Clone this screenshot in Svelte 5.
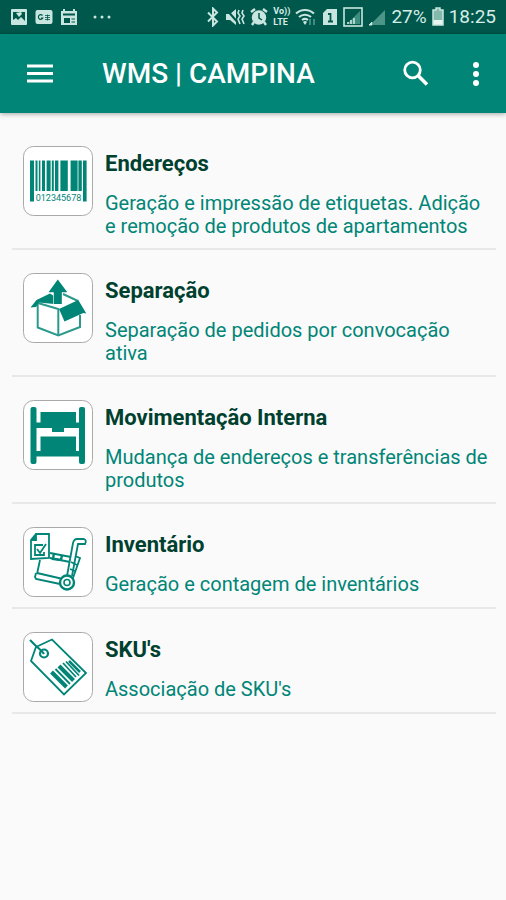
<script>
	const title = 'WMS | CAMPINA';

	const items = [
		{
			icon: 'barcode',
			name: 'Endereços',
			description: 'Geração e impressão de etiquetas. Adição e remoção de produtos de apartamentos'
		},
		{
			icon: 'box',
			name: 'Separação',
			description: 'Separação de pedidos por convocação ativa'
		},
		{
			icon: 'rack',
			name: 'Movimentação Interna',
			description: 'Mudança de endereços e transferências de produtos'
		},
		{
			icon: 'cart',
			name: 'Inventário',
			description: 'Geração e contagem de inventários'
		},
		{
			icon: 'tag',
			name: "SKU's",
			description: "Associação de SKU's"
		}
	];

	// [x, width] of each bar
	const bars = [
		[12.5, 2],
		[15.8, 1.6],
		[19, 3],
		[23.6, 4],
		[28.8, 2],
		[32, 3.4],
		[37.4, 7.4],
		[47.6, 7],
		[55.4, 3.4]
	];
</script>

<div class="statusBar">
	<div class="group notifications">
		<svg width="18" height="18" viewBox="0 0 18 18">
			<rect x="1" y="1" width="16" height="16" rx="1" fill="#c8e6df" />
			<path d="M3 4h12v9l-4-4-3 3-2-2-3 2z" fill="#00574b" />
			<path d="M6 5l3 4 3-3-1-2z" fill="#c8e6df" />
		</svg>
		<svg width="18" height="18" viewBox="0 0 18 18">
			<rect x="0.5" y="2" width="17" height="14" rx="2" fill="#c8e6df" />
			<path d="M7.5 7.5a2.3 2.3 0 1 0 .3 2.5H6" fill="none" stroke="#00574b" stroke-width="1.2" />
			<path d="M10 7.5h5M10 9.5h5M10 11.5h5M12.5 6.5v6" stroke="#00574b" stroke-width="0.8" />
		</svg>
		<svg width="18" height="18" viewBox="0 0 18 18">
			<path d="M1 3h2V1h2v2h8V1h2v2h2v14H1z" fill="#c8e6df" />
			<path d="M3 6.5h12" stroke="#00574b" stroke-width="2" />
			<path d="M4 10h6v5H4z" fill="#00574b" />
			<path d="M11.500 11h3.500M11.500 14h3.500" stroke="#00574b" />
		</svg>
		<svg class="more" width="20" height="18" viewBox="0 0 20 18" fill="#c8e6df">
			<circle cx="2" cy="9" r="1.5" />
			<circle cx="9" cy="9" r="1.5" />
			<circle cx="16" cy="9" r="1.5" />
		</svg>
	</div>
	<div class="group">
		<svg width="14" height="20" viewBox="0 0 14 20">
			<path d="M2 5.5l9 9-4 4V1.5l4 4-9 9" fill="none" stroke="#c8e6df" stroke-width="2" />
		</svg>
		<svg width="20" height="20" viewBox="0 0 20 20">
			<path d="M1 7h4l6-5v16l-6-5H1z" fill="#c8e6df" />
			<path d="M1 2l14 16" stroke="#00574b" stroke-width="2" />
			<path d="M14 3l-1 3 2 3-2 3 2 5M18 3l-1 3 2 3-2 3 2 5" fill="none" stroke="#c8e6df" stroke-width="1.6" />
		</svg>
		<svg width="18" height="20" viewBox="0 0 18 20">
			<circle cx="9" cy="10.5" r="7.2" fill="#c8e6df" />
			<path d="M1 5l4-3M17 5l-4-3M4 15l-2 3M14 15l2 3" stroke="#c8e6df" stroke-width="2.4" />
			<path d="M9 6v5l3 2" fill="none" stroke="#00574b" stroke-width="1.5" />
		</svg>
		<span class="volte"><span>Vo))</span><span>LTE</span></span>
		<svg width="22" height="20" viewBox="0 0 22 20">
			<path d="M1 6.5a13 13 0 0 1 18 0M4 10a9 9 0 0 1 12 0M7 13a5 5 0 0 1 6 0" fill="none" stroke="#c8e6df" stroke-width="2" />
			<path d="M8 15a3 3 0 0 1 4 0l-2 3z" fill="#c8e6df" />
			<path d="M15 12v6M19 12v6" stroke="#3f8d80" stroke-width="2" />
		</svg>
		<svg width="16" height="20" viewBox="0 0 16 20">
			<path d="M5 2h10v16H1V6z" fill="#c8e6df" />
			<path d="M6 7h2.5v7M6 14.5h5" fill="none" stroke="#00574b" stroke-width="1.8" />
		</svg>
		<svg width="20" height="20" viewBox="0 0 20 20">
			<rect x="1" y="1" width="18" height="18" fill="none" stroke="#c8e6df" stroke-width="1.6" />
			<path d="M17 4v13H4z" fill="#3f8d80" />
			<path d="M5 17v-2M8 17v-4M11 17v-6" stroke="#c8e6df" stroke-width="1.6" />
		</svg>
		<svg width="18" height="20" viewBox="0 0 18 20">
			<path d="M17 3v15H5v-3z" fill="#4b9589" />
			<path d="M1 18h3v-3z" fill="#c8e6df" stroke="#c8e6df" />
		</svg>
		<span class="percent">27%</span>
		<svg width="12" height="20" viewBox="0 0 12 20">
			<path d="M1 3h3V1h4v2h3v15H1z" fill="#83b8ad" />
			<path d="M1 13h10v5H1z" fill="#e6f6f2" />
			<path d="M1 3h3V1h4v2h3v15H1z" fill="none" stroke="#c8e6df" stroke-width="1.5" />
		</svg>
		<span class="clock">18:25</span>
	</div>
</div>

<header class="appBar">
	<button class="iconButton" aria-label="Menu">
		<svg width="28" height="28" viewBox="0 0 28 28">
			<path d="M1 6h26M1 13.5h26M1 21h26" stroke="#fff" stroke-width="3" />
		</svg>
	</button>
	<h1>{title}</h1>
	<button class="iconButton" aria-label="Buscar">
		<svg width="28" height="28" viewBox="0 0 28 28" fill="none" stroke="#fff">
			<circle cx="10.5" cy="10" r="7.8" stroke-width="2.8" />
			<path d="M16 15.5l9 9" stroke-width="3.6" />
		</svg>
	</button>
	<button class="iconButton overflow" aria-label="Mais opções">
		<svg width="8" height="28" viewBox="0 0 8 28" fill="#fff">
			<circle cx="4" cy="5" r="3" />
			<circle cx="4" cy="14" r="3" />
			<circle cx="4" cy="23" r="3" />
		</svg>
	</button>
</header>

<main>
	<ul>
		{#each items as item}
			<li>
				<a href="#{item.icon}">
					<svg class="picture" width="70" height="70" viewBox="0 0 70 70" aria-hidden="true">
						<rect x="0.5" y="0.5" width="69" height="69" rx="10" fill="#fff" stroke="#a9a9a9" />
						{#if item.icon === 'barcode'}
							<g fill="#008577">
								<rect x="7" y="14.5" width="4" height="41" />
								<rect x="60" y="14.5" width="3.6" height="41" />
								{#each bars as [x, width]}
									<rect {x} y="14.5" {width} height="30.5" />
								{/each}
								<text x="35.5" y="55" text-anchor="middle">012345678</text>
							</g>
						{:else if item.icon === 'box'}
							<g fill="none" stroke="#2b9a8c" stroke-width="2">
								<path d="M14.700 31v23.500l20.600 8 21.700-8.500V42" />
								<path d="M35.300 62V36L15 30" />
								<path d="M40 21l15 7" />
							</g>
							<g fill="#008577">
								<path d="M7.500 34.500l6-7.500L27 20.500l4 2.500v8l-15-1.500-3 4.500z" />
								<path d="M36 36l19.300-9 8 13.500-3-.5-18.800 8.500z" />
							</g>
							<path d="M34.800 6.500L25.500 19.300h5.300V31h8V19.300h5.500z" fill="#008577" stroke="#fff" stroke-width="1.2" paint-order="stroke" />
						{:else if item.icon === 'rack'}
							<g fill="#008577">
								<rect x="7.5" y="7" width="6" height="57" rx="2" />
								<rect x="56" y="7" width="6" height="57" rx="2" />
								<rect x="12" y="22.5" width="45" height="5.5" />
								<rect x="12" y="51" width="45" height="5.5" />
								<rect x="17.5" y="12" width="35.5" height="16" />
								<rect x="29" y="27" width="12" height="5" />
								<rect x="17.5" y="36.5" width="35.5" height="19" />
							</g>
						{:else if item.icon === 'cart'}
							<g fill="none" stroke="#008577" stroke-width="1.8">
								<path d="M13 7h13v24l-18 1V13z" />
								<path d="M13 7v6H8" fill="#008577" />
								<path d="M20 18h-8v10h9v-3M14 22l3 4 6-9" />
								<path d="M17 33l-3 14M27 26l21 4M27 31l20 4" />
								<path d="M31 26l-1 6 8 1 1-5" stroke-width="2.4" />
								<path d="M13 46l-1 4 1 2 24 5M14 46l26 6" />
								<path d="M44 49l6-33q1-4 4-4h7q3 1 1 5h-7l-6 32" />
								<path d="M52 29l5 2-7 20M48 35l6 3M47 42l5 2" />
								<circle cx="44" cy="55.5" r="7" fill="#fff" stroke-width="2.4" />
								<circle cx="44" cy="55.5" r="3" stroke-width="1.6" />
							</g>
						{:else}
							<g fill="none" stroke="#008577" stroke-width="1.8">
								<path d="M13 15L29 7.5 63 41 41 62.500 8 29z" />
								<circle cx="21" cy="21.500" r="4" stroke-width="2.2" />
								<path d="M7 8l6 6q6 5 8 8" stroke-width="2.2" />
								<path d="M28.5 40l15 15" stroke-width="4" />
								<path d="M32.5 37l14.5 15" />
								<path d="M36 34l14.5 14.5" stroke-width="4" />
								<path d="M40 31l13 14M43 29.5l13 14" />
								<path d="M46 29l11 11" stroke-width="2.5" />
							</g>
						{/if}
					</svg>
					<span class="text">
						<strong>{item.name}</strong>
						<span class="description">{item.description}</span>
					</span>
				</a>
			</li>
		{/each}
	</ul>
</main>

<style>
	:global(body) {
		background: #fafafa;
		font-family: Roboto, 'Liberation Sans', sans-serif;
	}
	svg {
		display: block;
		flex: none;
	}
	.statusBar {
		display: flex;
		justify-content: space-between;
		align-items: center;
		height: 34px;
		padding: 0 10px;
		background: #00574b;
		color: #d5ede8;
	}
	.group {
		display: flex;
		align-items: center;
		gap: 5px;
	}
	.notifications {
		gap: 7px;
	}
	.more {
		margin-left: 8px;
	}
	.volte {
		display: flex;
		flex-direction: column;
		font-size: 9px;
		font-weight: 700;
		line-height: 11px;
	}
	.percent,
	.clock {
		font-size: 19px;
		line-height: 24px;
	}
	.appBar {
		position: relative;
		display: flex;
		align-items: center;
		height: 79px;
		padding: 0 16px 0 26px;
		background: #008577;
		box-shadow: 0 1px 5px rgba(0, 0, 0, 0.35);
	}
	.iconButton {
		display: block;
		border: none;
		padding: 0;
		background: none;
		cursor: pointer;
	}
	.overflow {
		margin-left: 32px;
		padding: 0 10px;
	}
	h1 {
		flex: 1;
		margin: 0 0 0 48px;
		color: #fff;
		font-size: 28px;
		font-weight: 500;
		line-height: 36px;
	}
	main {
		padding: 10px 10px 0 12px;
	}
	ul {
		margin: 0;
		padding: 0;
		list-style: none;
	}
	li {
		border-bottom: 2px solid #e8e8e8;
	}
	a {
		display: flex;
		align-items: flex-start;
		gap: 12px;
		padding: 23px 4px 10px 11px;
		color: #008577;
		text-decoration: none;
	}
	.picture text {
		font-size: 9px;
	}
	.text {
		display: flex;
		flex-direction: column;
		gap: 10px;
	}
	strong {
		color: #00402f;
		font-size: 22px;
		font-weight: 700;
		line-height: 36px;
	}
	.description {
		font-size: 20px;
		line-height: 23px;
	}
</style>
